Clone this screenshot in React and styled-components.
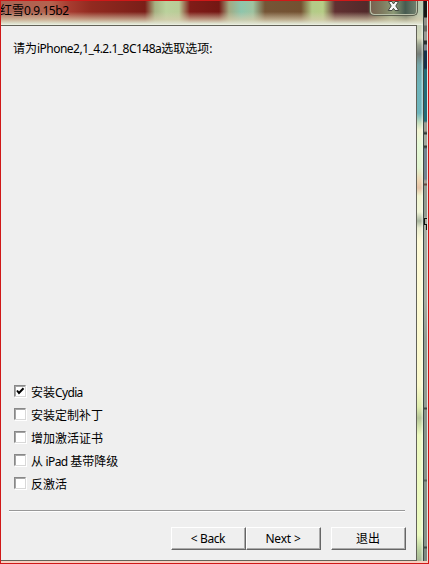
import React from "react";
import styled, { createGlobalStyle } from "styled-components";

const GlobalStyle = createGlobalStyle`
  * { box-sizing: border-box; }
  body { margin: 0; overflow: hidden; }
`;

const Frame = styled.div`
  width: 429px;
  height: 564px;
  display: grid;
  grid-template-columns: 416px 6px 5px;
  grid-template-rows: 24px 536px 2px;
  border: 1px solid #d01818;
  background: #f7cfc0;
  font: 12px "Noto Sans", "Noto Sans CJK SC", sans-serif;
  color: #000;
  overflow: hidden;
`;

const TitleBar = styled.header`
  grid-column: 1 / 3;
  display: flex;
  justify-content: space-between;
  background:
    linear-gradient(180deg, transparent 0 45%, rgba(215, 205, 175, 0.75) 78%, #dfe3d0 94%, #f0f3e8),
    linear-gradient(90deg,
      #a86455 0, #b5624e 50px, #a83c30 68px, #922a20 90px, #7a1e18 144px,
      #a6b283 154px, #bad19c 165px, #b9cc97 178px, #801c18 189px, #741713 218px,
      #a3a982 228px, #8ec5ac 240px, #9fc3a0 252px, #755536 264px, #735131 300px,
      #b3ca88 311px, #b6cd86 322px, #613031 334px, #52292a 366px, #6b674b 378px,
      #94a983 390px, #526453 405px, #b7c7ac 417px, #bccdb4 422px);
`;

const Title = styled.h1`
  margin: 0 0 0 -1px;
  font-size: 12px;
  font-weight: 400;
  line-height: 20px;
  white-space: nowrap;
`;

const CloseButton = styled.button`
  width: 49px;
  height: 15px;
  margin-right: 5px;
  padding: 0;
  display: flex;
  justify-content: center;
  border: 1px solid #5c604f;
  border-top: 0;
  border-radius: 0 0 5px 5px;
  box-shadow: inset 1px -1px #b9bfa8, inset -1px 0 #b9bfa8;
  background: linear-gradient(90deg, #77604f, #7e7a5f 25%, #8c9a76 50%, #475b50 75%, #73836f);
`;

const Panel = styled.main`
  display: flex;
  flex-direction: column;
  background: #efefef;
  border: solid #626258;
  border-width: 1px 1px 1px 0;
`;

const Prompt = styled.p`
  margin: 13px 0 0 12px;
  height: 20px;
  line-height: 20px;
  white-space: nowrap;
`;

const Latin = styled.span`
  letter-spacing: ${(p) => p.$gap || 0}px;
`;

const Options = styled.div`
  margin: 322px 0 0 13px;
  display: flex;
  flex-direction: column;
`;

const Option = styled.label`
  height: 23px;
  display: flex;
  align-items: center;
  gap: 5px;
  line-height: 20px;
  white-space: nowrap;
`;

const CheckBox = styled.span`
  width: 12px;
  height: 12px;
  margin-bottom: 3px;
  background: #fff;
  border: 1px solid #d8d8d8;
  border-top: 1px solid #888;
  border-left: 1px solid #888;
  box-shadow: inset 1px 1px #a5a5a5, 1px 1px #fff;
  svg { display: block; }
`;

const Divider = styled.hr`
  margin: 14px 11px 0 8px;
  border: 0;
  height: 2px;
  background: linear-gradient(#999 50%, #fff 50%);
`;

const Actions = styled.footer`
  display: flex;
  margin: 15px 10px 0 170px;
`;

const Button = styled.button`
  width: 75px;
  height: 23px;
  padding: 0 1px 1px 0;
  margin-left: ${(p) => p.$left || 0}px;
  background: #efefef;
  border: solid;
  border-width: 1px;
  border-color: #fff #666 #666 #fff;
  box-shadow: inset -1px -1px #aaa;
  font: inherit;
  line-height: 19px;
  letter-spacing: ${(p) => p.$gap || 0}px;
  color: #000;
`;

const GlassEdge = styled.div`
  background:
    linear-gradient(90deg, transparent 60%, rgba(255, 255, 255, 0.55)),
    linear-gradient(180deg,
      #c8d2bb 0, #d5d9bc 13px, #9ba390 20px, #777e79 29px, #75a6a8 40px,
      #6db4ba 60px, #6eb5bc 88px, #c7dfbf 98px, #f3f4d2 105px, #e5f9d7 120px,
      #e1f4d0 143px, #efd5b1 156px, #e7c4a7 163px, #f1f5d0 171px, #f1f5d8 187px,
      #a9b69f 196px, #e9ecd0 203px, #fffbd8 216px, #fbf9cc 360px, #dfedae 382px,
      #b7c69a 393px, #cddda8 400px, #edf9c0 410px, #ebfabf 510px, #b9d09f 525px, #a7b898);
`;

const Desktop = styled.aside`
  grid-column: 3;
  grid-row: 1 / 3;
  padding-top: 217px;
  border-left: 1px solid #3d4842;
  border-right: 1px solid #e9e5df;
  background: linear-gradient(180deg,
    #171815 0 16px, #929089 17px 24px, #656560 25px 30px, #9a9893 31px 39px,
    #293030 40px 43px, #7b818b 44px 49px, #17314a 50px 67px, #246b77 69px 120px,
    #9d9c91 122px 130px, #333b35 132px 133px, #a3a89d 134px 144px, #343b36 145px 146px,
    #738391 148px 178px, #a1a097 180px 182px, #694a40 183px 184px, #939b91 185px 215px,
    #a8aca3 217px 300px, #929c94 340px 406px,
    #404744 407px 408px, #87938b 409px 478px, #56625b 479px 480px, #87938b 481px 545px,
    #404944 546px 547px, #7e8881 548px);
  svg { display: block; }
`;

const BottomGlow = styled.div`
  grid-column: 1 / 4;
  background: #f7cfc0;
`;

const options = [
  { text: "安装", latin: "Cydia", gap: -0.65, checked: true },
  { text: "安装定制补丁" },
  { text: "增加激活证书" },
  { text: "从", latin: " iPad ", gap: -0.6, rest: "基带降级" },
  { text: "反激活" },
];

export default function App() {
  return (
    <>
      <GlobalStyle />
      <Frame>
        <TitleBar>
          <Title>红雪<Latin $gap={-0.45}>0.9.15b2</Latin></Title>
          <CloseButton aria-label="Close">
            <svg width="13" height="12" viewBox="0 0 13 12">
              <path d="M1.5 0.5H5L6.5 3 8 .5H11.5L8.8 5 11.8 9.5H8L6.5 7.3 5 9.5H1.2L4.2 5Z" fill="#f7f7f7" stroke="#454b42" />
            </svg>
          </CloseButton>
        </TitleBar>
        <Panel>
          <Prompt>请为<Latin $gap={-0.52}>iPhone2,1_4.2.1_8C148a</Latin>选取选项:</Prompt>
          <Options>
            {options.map((o) => (
              <Option key={o.text}>
                <CheckBox role="checkbox" aria-checked={!!o.checked}>
                  {o.checked && (
                    <svg width="10" height="10" viewBox="0 0 10 10">
                      <path d="M2 4.5 4 7 8.5 2.2" fill="none" stroke="#000" strokeWidth="2" />
                    </svg>
                  )}
                </CheckBox>
                <span>{o.text}{o.latin && <Latin $gap={o.gap}>{o.latin}</Latin>}{o.rest}</span>
              </Option>
            ))}
          </Options>
          <Divider />
          <Actions>
            <Button $gap={-0.4}>&lt; Back</Button>
            <Button $gap={-0.2}>Next &gt;</Button>
            <Button $left={10}>退出</Button>
          </Actions>
        </Panel>
        <GlassEdge />
        <Desktop>
          <svg width="3" height="12" viewBox="0 0 3 12">
            <path d="M0 .5H3M.5 0V7M0 6.5H3M2.5 6V12" fill="none" stroke="#10130f" />
          </svg>
        </Desktop>
        <BottomGlow />
      </Frame>
    </>
  );
}
